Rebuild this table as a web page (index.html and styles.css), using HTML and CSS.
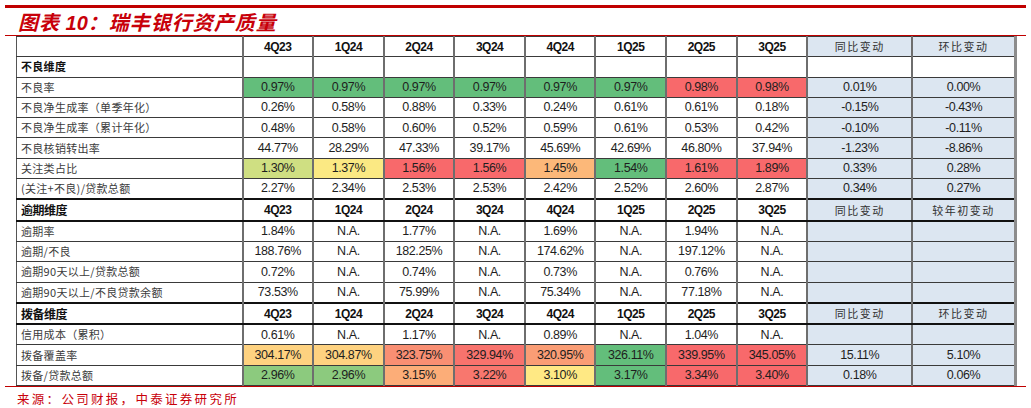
FILE: index.html
```html
<!DOCTYPE html>
<html lang="zh-CN">
<head>
<meta charset="utf-8">
<title>瑞丰银行资产质量</title>
<link rel="stylesheet" href="styles.css">
</head>
<body>
<div class="page">
  <div class="topline"></div>
  <h1 class="title"><span class="tw">图表</span> <span class="num">10</span>：瑞丰银行资产质量</h1>
  <div class="table-wrap">
    <table class="grid">
      <colgroup>
        <col class="c-label">
        <col class="c-q"><col class="c-q"><col class="c-q"><col class="c-q">
        <col class="c-q"><col class="c-q"><col class="c-q"><col class="c-q">
        <col class="c-yoy"><col class="c-qoq">
      </colgroup>
      <tbody>
        <tr class="head">
          <td class="lbl"></td>
          <td>4Q23</td><td>1Q24</td><td>2Q24</td><td>3Q24</td><td>4Q24</td><td>1Q25</td><td>2Q25</td><td>3Q25</td>
          <td class="chg cn">同比变动</td><td class="chg cn last">环比变动</td>
        </tr>
        <tr>
          <td class="lbl sec">不良维度</td>
          <td></td><td></td><td></td><td></td><td></td><td></td><td></td><td></td>
          <td></td><td class="last"></td>
        </tr>
        <tr>
          <td class="lbl">不良率</td>
          <td class="g">0.97%</td><td class="g">0.97%</td><td class="g">0.97%</td><td class="g">0.97%</td><td class="g">0.97%</td><td class="g">0.97%</td><td class="r">0.98%</td><td class="r">0.98%</td>
          <td class="chg">0.01%</td><td class="chg last">0.00%</td>
        </tr>
        <tr>
          <td class="lbl">不良净生成率（单季年化）</td>
          <td>0.26%</td><td>0.58%</td><td>0.88%</td><td>0.33%</td><td>0.24%</td><td>0.61%</td><td>0.61%</td><td>0.18%</td>
          <td class="chg">-0.15%</td><td class="chg last">-0.43%</td>
        </tr>
        <tr>
          <td class="lbl">不良净生成率（累计年化）</td>
          <td>0.48%</td><td>0.58%</td><td>0.60%</td><td>0.52%</td><td>0.59%</td><td>0.61%</td><td>0.53%</td><td>0.42%</td>
          <td class="chg">-0.10%</td><td class="chg last">-0.11%</td>
        </tr>
        <tr>
          <td class="lbl">不良核销转出率</td>
          <td>44.77%</td><td>28.29%</td><td>47.33%</td><td>39.17%</td><td>45.69%</td><td>42.69%</td><td>46.80%</td><td>37.94%</td>
          <td class="chg">-1.23%</td><td class="chg last">-8.86%</td>
        </tr>
        <tr>
          <td class="lbl">关注类占比</td>
          <td class="yg">1.30%</td><td class="y">1.37%</td><td class="r">1.56%</td><td class="r">1.56%</td><td class="o">1.45%</td><td class="g">1.54%</td><td class="r">1.61%</td><td class="r">1.89%</td>
          <td class="chg">0.33%</td><td class="chg last">0.28%</td>
        </tr>
        <tr>
          <td class="lbl">(关注+不良)/贷款总额</td>
          <td>2.27%</td><td>2.34%</td><td>2.53%</td><td>2.53%</td><td>2.42%</td><td>2.52%</td><td>2.60%</td><td>2.87%</td>
          <td class="chg">0.34%</td><td class="chg last">0.27%</td>
        </tr>
        <tr class="head sect">
          <td class="lbl sec">逾期维度</td>
          <td>4Q23</td><td>1Q24</td><td>2Q24</td><td>3Q24</td><td>4Q24</td><td>1Q25</td><td>2Q25</td><td>3Q25</td>
          <td class="chg cn">同比变动</td><td class="chg cn last">较年初变动</td>
        </tr>
        <tr>
          <td class="lbl">逾期率</td>
          <td>1.84%</td><td>N.A.</td><td>1.77%</td><td>N.A.</td><td>1.69%</td><td>N.A.</td><td>1.94%</td><td>N.A.</td>
          <td class="chg"></td><td class="chg last"></td>
        </tr>
        <tr>
          <td class="lbl">逾期/不良</td>
          <td>188.76%</td><td>N.A.</td><td>182.25%</td><td>N.A.</td><td>174.62%</td><td>N.A.</td><td>197.12%</td><td>N.A.</td>
          <td class="chg"></td><td class="chg last"></td>
        </tr>
        <tr>
          <td class="lbl">逾期90天以上/贷款总额</td>
          <td>0.72%</td><td>N.A.</td><td>0.74%</td><td>N.A.</td><td>0.73%</td><td>N.A.</td><td>0.76%</td><td>N.A.</td>
          <td class="chg"></td><td class="chg last"></td>
        </tr>
        <tr>
          <td class="lbl">逾期90天以上/不良贷款余额</td>
          <td>73.53%</td><td>N.A.</td><td>75.99%</td><td>N.A.</td><td>75.34%</td><td>N.A.</td><td>77.18%</td><td>N.A.</td>
          <td class="chg"></td><td class="chg last"></td>
        </tr>
        <tr class="head sect">
          <td class="lbl sec">拨备维度</td>
          <td>4Q23</td><td>1Q24</td><td>2Q24</td><td>3Q24</td><td>4Q24</td><td>1Q25</td><td>2Q25</td><td>3Q25</td>
          <td class="chg cn">同比变动</td><td class="chg cn last">环比变动</td>
        </tr>
        <tr>
          <td class="lbl">信用成本（累积）</td>
          <td>0.61%</td><td>N.A.</td><td>1.17%</td><td>N.A.</td><td>0.89%</td><td>N.A.</td><td>1.04%</td><td>N.A.</td>
          <td class="chg"></td><td class="chg last"></td>
        </tr>
        <tr>
          <td class="lbl">拨备覆盖率</td>
          <td class="lo">304.17%</td><td class="lo">304.87%</td><td class="sa">323.75%</td><td class="r2">329.94%</td><td class="sb">320.95%</td><td class="g">326.11%</td><td class="r">339.95%</td><td class="r">345.05%</td>
          <td class="chg">15.11%</td><td class="chg last">5.10%</td>
        </tr>
        <tr>
          <td class="lbl">拨备/贷款总额</td>
          <td class="lg">2.96%</td><td class="lg">2.96%</td><td class="o2">3.15%</td><td class="r3">3.22%</td><td class="y2">3.10%</td><td class="g">3.17%</td><td class="r">3.34%</td><td class="r">3.40%</td>
          <td class="chg">0.18%</td><td class="chg last">0.06%</td>
        </tr>
      </tbody>
    </table>
  </div>
  <p class="source">来源：公司财报，中泰证券研究所</p>
</div>
</body>
</html>
```

FILE: styles.css
```css
html, body {
  margin: 0;
  padding: 0;
  background: #ffffff;
}

.page {
  width: 1021px;
  padding: 5px 0 0 5px;
  font-family: "Liberation Sans", Arial, "Noto Sans CJK SC", sans-serif;
}

.topline {
  height: 3px;
  background: #c00000;
}

.title {
  margin: 0;
  height: 27px;
  padding-left: 13px;
  border-bottom: 1px solid #c00000;
  color: #c8000a;
  font-family: "Noto Sans CJK SC", sans-serif;
  font-size: 20px;
  font-weight: 700;
  font-style: italic;
  line-height: 27px;
  letter-spacing: 1px;
  white-space: nowrap;
}

.title .num {
  font-family: "Liberation Sans", Arial, sans-serif;
  font-weight: 700;
  letter-spacing: 0;
}

.table-wrap {
  padding-left: 11px;
  border-bottom: 1px solid #c00000;
  width: 1010px;
}

.grid {
  width: 999px;
  table-layout: fixed;
  border-collapse: collapse;
}

.c-label { width: 226px; }
.c-q { width: 70.6px; }
.c-yoy { width: 105px; }
.c-qoq { width: 103px; }

.grid td {
  height: 19.3px;
  padding: 0;
  border-top: 1px solid #3a3a3a;
  border-bottom: 1px solid #3a3a3a;
  border-left: 2px solid #6e6e6e;
  border-right: 2px solid #6e6e6e;
  text-align: center;
  vertical-align: middle;
  font-family: "Liberation Sans", Arial, sans-serif;
  font-size: 12.5px;
  letter-spacing: -0.4px;
  color: #1e1e1e;
  line-height: 1;
  white-space: nowrap;
  overflow: hidden;
}

.grid td.lbl {
  text-align: left;
  padding-left: 4px;
  border-left: 1px solid #555;
  font-family: "Noto Sans CJK SC", sans-serif;
  font-size: 11px;
  letter-spacing: 0.3px;
  color: #3c3c3c;
}

.grid td.sec {
  font-weight: 700;
  color: #111;
}

.grid tr.head td {
  font-weight: 700;
  font-size: 12px;
  letter-spacing: -0.5px;
  color: #111;
}

.grid tr.sect td {
  border-top: 2px solid #111;
  border-bottom: 2px solid #111;
}

.grid td.cn,
.grid tr.head td.cn {
  font-family: "Noto Sans CJK SC", sans-serif;
  font-weight: 400;
  font-size: 11px;
  letter-spacing: 1.5px;
  color: #333;
}

.grid td.chg {
  background: #dce6f1;
}

.grid td.last {
  border-right: 3px solid #8c8c8c;
}

/* heat-map colours */
.g  { background: #63be7b; }
.r  { background: #f8696b; }
.y  { background: #fbe983; }
.yg { background: #cfdf82; }
.o  { background: #fcb879; }
.lo { background: #fed280; }
.sa { background: #f98f73; }
.r2 { background: #f8736d; }
.sb { background: #fa9d75; }
.lg { background: #8cca7e; }
.o2 { background: #fcad78; }
.r3 { background: #f8776e; }
.y2 { background: #ffe984; }

.source {
  margin: 4px 0 0 12px;
  color: #c8000a;
  font-family: "Noto Sans CJK SC", sans-serif;
  font-size: 12.5px;
  letter-spacing: 2.3px;
  line-height: 16px;
  white-space: nowrap;
}
```
